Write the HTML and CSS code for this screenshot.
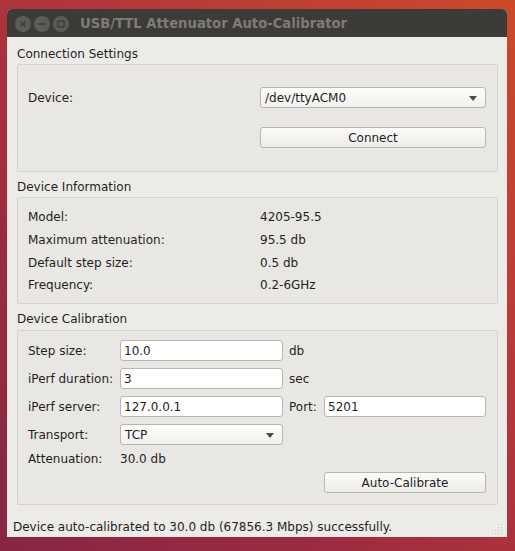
FILE: index.html
```html
<!DOCTYPE html>
<html>
<head>
<meta charset="utf-8">
<link rel="stylesheet" href="styles.css">
</head>
<body>
<div class="window">
  <div class="titlebar">
    <div class="wbtns">
      <span class="wbtn"><svg width="16" height="16" viewBox="0 0 16 16"><path d="M5.5 5.5 L10.5 10.5 M10.5 5.5 L5.5 10.5" stroke="#3a3935" stroke-width="1.3" fill="none"/></svg></span>
      <span class="wbtn"><svg width="16" height="16" viewBox="0 0 16 16"><path d="M4.5 8 H11.5" stroke="#3a3935" stroke-width="1.5" fill="none"/></svg></span>
      <span class="wbtn"><svg width="16" height="16" viewBox="0 0 16 16"><rect x="5" y="5" width="6" height="6" stroke="#3a3935" stroke-width="1.2" fill="none"/></svg></span>
    </div>
    <div class="wtitle">USB/TTL Attenuator Auto-Calibrator</div>
  </div>
  <div class="content">
    <div class="gtitle first">Connection Settings</div>
    <div class="gbox conn">
      <div class="lbl">Device:</div>
      <div class="combo"><span>/dev/ttyACM0</span><i class="arrow"></i></div>
      <div></div>
      <div class="btn">Connect</div>
    </div>

    <div class="gtitle">Device Information</div>
    <div class="gbox info">
      <div class="lbl">Model:</div><div class="val">4205-95.5</div>
      <div class="lbl">Maximum attenuation:</div><div class="val">95.5 db</div>
      <div class="lbl">Default step size:</div><div class="val">0.5 db</div>
      <div class="lbl">Frequency:</div><div class="val">0.2-6GHz</div>
    </div>

    <div class="gtitle third">Device Calibration</div>
    <div class="gbox calib">
      <div class="lbl">Step size:</div><div class="input">10.0</div><div class="unit">db</div><div></div>
      <div class="lbl">iPerf duration:</div><div class="input">3</div><div class="unit">sec</div><div></div>
      <div class="lbl">iPerf server:</div><div class="input">127.0.0.1</div><div class="unit">Port:</div><div class="input">5201</div>
      <div class="lbl">Transport:</div><div class="combo"><span>TCP</span><i class="arrow"></i></div><div></div><div></div>
      <div class="lbl">Attenuation:</div><div class="val">30.0 db</div><div></div><div></div>
      <div></div><div></div><div></div><div class="btn">Auto-Calibrate</div>
    </div>
  </div>
  <div class="status">Device auto-calibrated to 30.0 db (67856.3 Mbps) successfully.</div>
  <svg class="grip" width="12" height="12" viewBox="0 0 12 12">
    <g fill="#c9c5bf">
      <rect x="9" y="1" width="1" height="1"/>
      <rect x="6" y="4" width="1" height="1"/><rect x="9" y="4" width="1" height="1"/>
      <rect x="3" y="7" width="1" height="1"/><rect x="6" y="7" width="1" height="1"/><rect x="9" y="7" width="1" height="1"/>
      <rect x="0" y="10" width="1" height="1"/><rect x="3" y="10" width="1" height="1"/><rect x="6" y="10" width="1" height="1"/><rect x="9" y="10" width="1" height="1"/>
    </g>
  </svg>
</div>
</body>
</html>
```
FILE: styles.css
```css
html, body {
  margin: 0;
  padding: 0;
  width: 515px;
  height: 551px;
  overflow: hidden;
}
body {
  background: linear-gradient(225deg, #cc4a2a 0%, #b8383a 35%, #9c2b40 70%, #862644 100%);
  font-family: "DejaVu Sans", sans-serif;
  font-size: 12px;
  color: #1f1f1f;
  padding: 9px 0 0 7px;
  box-sizing: border-box;
}
.window {
  position: relative;
  width: 500px;
  height: 528px;
  background: #edebe7;
  border-radius: 5px 5px 0 0;
  overflow: hidden;
}
.titlebar {
  height: 28px;
  background: #3c3b37;
  display: flex;
  align-items: center;
}
.wbtns {
  display: flex;
  gap: 3px;
  padding-left: 8px;
  margin-top: 1px;
}
.wbtn {
  width: 16px;
  height: 16px;
  border-radius: 50%;
  background: #5c5b56;
  display: flex;
}
.wtitle {
  margin-left: 11px;
  font-family: "DejaVu Sans", sans-serif;
  font-weight: bold;
  font-size: 13.2px;
  color: #7f7c75;
  margin-top: 1px;
}
.content {
  padding: 0 9px 0 10px;
}
.gtitle {
  padding-top: 5px;
  line-height: 21px;
  height: 25px;
  box-sizing: border-box;
}
.gtitle.first { height: 27px; padding-top: 7px; }
.gtitle.third { height: 26px; }
.gbox {
  border: 1px solid #d6d3ce;
  border-radius: 2px;
  background: #e9e7e3;
  box-sizing: border-box;
}
.conn {
  display: grid;
  grid-template-columns: 232px 226px;
  grid-template-rows: 21px 21px;
  row-gap: 19px;
  padding: 22px 11px 23px 10px;
  height: 108px;
}
.lbl, .val, .unit {
  display: flex;
  align-items: center;
  white-space: nowrap;
}
.combo, .btn, .input {
  box-sizing: border-box;
  height: 21px;
  border: 1px solid #b9b5af;
  border-radius: 3px;
  display: flex;
  align-items: center;
}
.combo {
  background: linear-gradient(#fdfdfc, #f1f0ee);
  padding-left: 4px;
  justify-content: space-between;
  padding-right: 8px;
}
.arrow {
  width: 0;
  height: 0;
  border-left: 4px solid transparent;
  border-right: 4px solid transparent;
  border-top: 5px solid #4a4a4a;
  margin-top: 1px;
}
.btn {
  background: linear-gradient(#fbfbfa, #eeece9);
  justify-content: center;
}
.input {
  background: #fff;
  padding-left: 3px;
}
.info {
  display: grid;
  grid-template-columns: 232px 1fr;
  grid-auto-rows: 22.67px;
  padding: 8px 11px 0 10px;
  height: 107px;
}
.calib {
  display: grid;
  grid-template-columns: 92px 163px 41px 162px;
  grid-template-rows: 21px 21px 21px 21px 13px 21px;
  row-gap: 7px;
  padding: 9px 11px 11px 10px;
  height: 175px;
}
.unit { padding-left: 6px; }
.status {
  padding: 15px 0 0 6px;
  line-height: 14px;
}
.grip {
  position: absolute;
  right: 3px;
  bottom: 2px;
}
```
